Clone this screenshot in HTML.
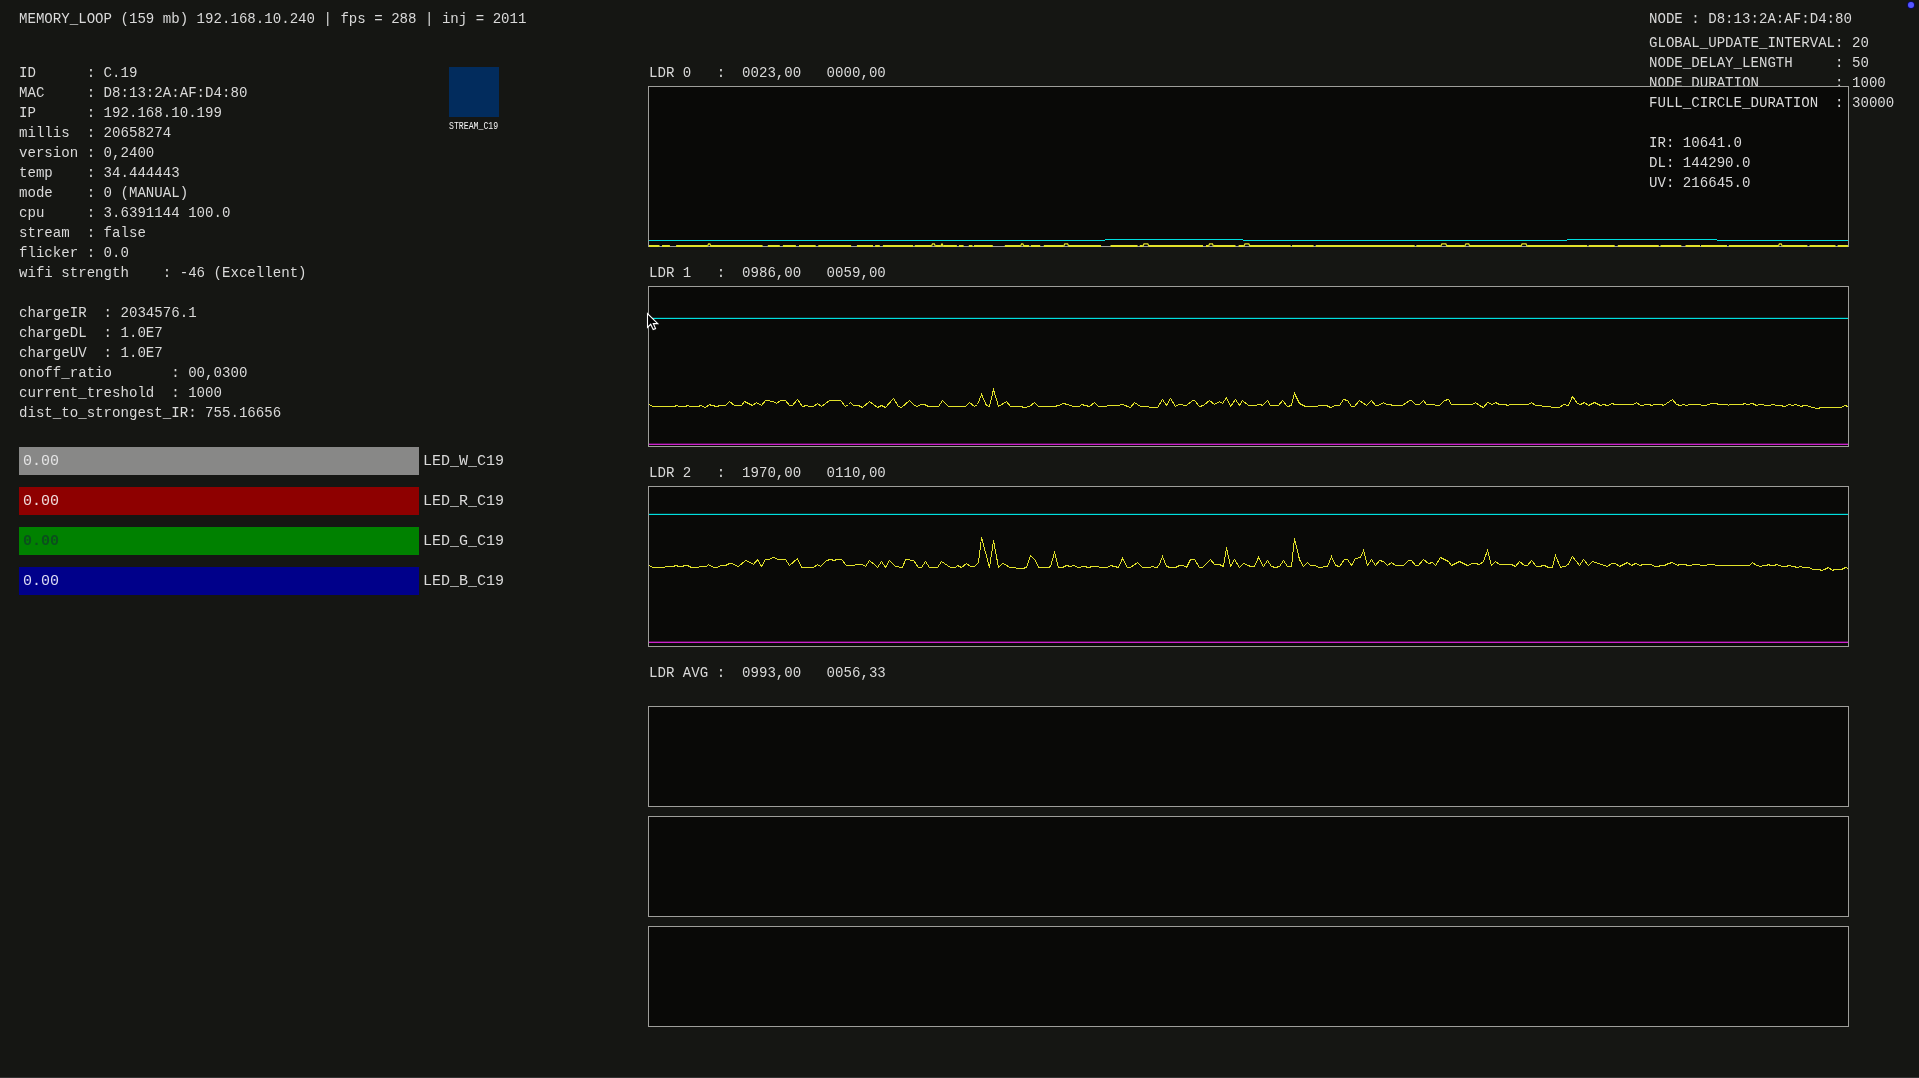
<!DOCTYPE html>
<html><head><meta charset="utf-8"><style>
html,body{margin:0;padding:0;}
body{will-change:transform;width:1919px;height:1078px;background:#151613;position:relative;overflow:hidden;}
.t{position:absolute;white-space:pre;font-family:"Liberation Mono",monospace;font-size:14.1px;line-height:16px;}
.b{position:absolute;white-space:pre;font-family:"Liberation Mono",monospace;font-size:15px;line-height:16px;}
.sm{position:absolute;white-space:pre;font-family:"Liberation Mono",monospace;font-size:8.2px;line-height:8px;color:#f4f4f4;transform:scaleY(1.3);transform-origin:0 0;}
.g{position:absolute;left:648px;width:1201px;box-sizing:border-box;border:1px solid #9e9e9a;background:#090907;}
</style></head><body>
<div class="t" style="left:19px;top:11px;color:#d9d9d9;">MEMORY_LOOP (159 mb) 192.168.10.240 | fps = 288 | inj = 2011</div>
<div class="t" style="left:19px;top:65px;color:#d9d9d9;">ID      : C.19</div>
<div class="t" style="left:19px;top:85px;color:#d9d9d9;">MAC     : D8:13:2A:AF:D4:80</div>
<div class="t" style="left:19px;top:105px;color:#d9d9d9;">IP      : 192.168.10.199</div>
<div class="t" style="left:19px;top:125px;color:#d9d9d9;">millis  : 20658274</div>
<div class="t" style="left:19px;top:145px;color:#d9d9d9;">version : 0,2400</div>
<div class="t" style="left:19px;top:165px;color:#d9d9d9;">temp    : 34.444443</div>
<div class="t" style="left:19px;top:185px;color:#d9d9d9;">mode    : 0 (MANUAL)</div>
<div class="t" style="left:19px;top:205px;color:#d9d9d9;">cpu     : 3.6391144 100.0</div>
<div class="t" style="left:19px;top:225px;color:#d9d9d9;">stream  : false</div>
<div class="t" style="left:19px;top:245px;color:#d9d9d9;">flicker : 0.0</div>
<div class="t" style="left:19px;top:265px;color:#d9d9d9;">wifi strength    : -46 (Excellent)</div>
<div class="t" style="left:19px;top:305px;color:#d9d9d9;">chargeIR  : 2034576.1</div>
<div class="t" style="left:19px;top:325px;color:#d9d9d9;">chargeDL  : 1.0E7</div>
<div class="t" style="left:19px;top:345px;color:#d9d9d9;">chargeUV  : 1.0E7</div>
<div class="t" style="left:19px;top:365px;color:#d9d9d9;">onoff_ratio       : 00,0300</div>
<div class="t" style="left:19px;top:385px;color:#d9d9d9;">current_treshold  : 1000</div>
<div class="t" style="left:19px;top:405px;color:#d9d9d9;">dist_to_strongest_IR: 755.16656</div>
<div style="position:absolute;left:449px;top:67px;width:50px;height:50px;background:#022c5d"></div>
<div class="sm" style="left:449px;top:121px">STREAM_C19</div>
<div style="position:absolute;left:19px;top:447px;width:400px;height:28px;background:#888887"></div>
<div class="b" style="left:23px;top:454px;color:#e4e4e4;">0.00</div>
<div class="b" style="left:423px;top:454px;color:#d9d9d9">LED_W_C19</div>
<div style="position:absolute;left:19px;top:487px;width:400px;height:28px;background:#8e0000"></div>
<div class="b" style="left:23px;top:494px;color:#f0dcdc;">0.00</div>
<div class="b" style="left:423px;top:494px;color:#d9d9d9">LED_R_C19</div>
<div style="position:absolute;left:19px;top:527px;width:400px;height:28px;background:#008100"></div>
<div class="b" style="left:23px;top:534px;color:#0b4f1d;font-weight:bold">0.00</div>
<div class="b" style="left:423px;top:534px;color:#d9d9d9">LED_G_C19</div>
<div style="position:absolute;left:19px;top:567px;width:400px;height:28px;background:#00008a"></div>
<div class="b" style="left:23px;top:574px;color:#dcdcf4;">0.00</div>
<div class="b" style="left:423px;top:574px;color:#d9d9d9">LED_B_C19</div>
<div class="t" style="left:1649px;top:11px;color:#d9d9d9;">NODE : D8:13:2A:AF:D4:80</div>
<div class="t" style="left:1649px;top:35px;color:#d9d9d9;">GLOBAL_UPDATE_INTERVAL: 20</div>
<div class="t" style="left:1649px;top:55px;color:#d9d9d9;">NODE_DELAY_LENGTH     : 50</div>
<div class="t" style="left:1649px;top:75px;color:#d9d9d9;">NODE_DURATION         : 1000</div>
<div class="g" style="top:86px;height:161px"></div>
<div class="g" style="top:286px;height:161px"></div>
<div class="g" style="top:486px;height:161px"></div>
<div class="g" style="top:706px;height:101px"></div>
<div class="g" style="top:816px;height:101px"></div>
<div class="g" style="top:926px;height:101px"></div>
<div class="t" style="left:649px;top:65px;color:#d9d9d9;">LDR 0   :  0023,00   0000,00</div>
<div class="t" style="left:649px;top:265px;color:#d9d9d9;">LDR 1   :  0986,00   0059,00</div>
<div class="t" style="left:649px;top:465px;color:#d9d9d9;">LDR 2   :  1970,00   0110,00</div>
<div class="t" style="left:649px;top:665px;color:#d9d9d9;">LDR AVG :  0993,00   0056,33</div>
<div style="position:absolute;left:649px;top:240px;width:456px;height:1px;background:#00dede"></div>
<div style="position:absolute;left:1105px;top:239px;width:138px;height:1px;background:#00dede"></div>
<div style="position:absolute;left:1243px;top:240px;width:324px;height:1px;background:#00dede"></div>
<div style="position:absolute;left:1567px;top:239px;width:150px;height:1px;background:#00dede"></div>
<div style="position:absolute;left:1717px;top:240px;width:131px;height:1px;background:#00dede"></div>
<div style="position:absolute;left:649px;top:317px;width:1199px;height:1px;background:rgba(0,222,222,0.18)"></div>
<div style="position:absolute;left:649px;top:318px;width:1199px;height:1px;background:#00dede"></div>
<div style="position:absolute;left:649px;top:443px;width:1199px;height:1px;background:rgba(204,34,204,0.35)"></div>
<div style="position:absolute;left:649px;top:444px;width:1199px;height:1px;background:#cc22cc"></div>
<div style="position:absolute;left:649px;top:513px;width:1199px;height:1px;background:rgba(0,222,222,0.18)"></div>
<div style="position:absolute;left:649px;top:514px;width:1199px;height:1px;background:#00dede"></div>
<div style="position:absolute;left:649px;top:641px;width:1199px;height:1px;background:rgba(204,34,204,0.35)"></div>
<div style="position:absolute;left:649px;top:642px;width:1199px;height:1px;background:#cc22cc"></div>
<svg style="position:absolute;left:0;top:0" width="1919" height="1078"><polyline fill="none" stroke="#e2e22a" stroke-width="1" stroke-linejoin="miter" shape-rendering="crispEdges" points="649.5,404.5 652.5,406.5 674.5,406.5 676.5,405.5 679.5,406.5 685.5,406.5 687.5,405.5 690.5,406.5 698.5,406.5 700.5,405.5 705.5,407.5 709.5,404.5 711.5,405.5 717.5,406.5 719.5,405.5 725.5,405.5 729.5,401.5 734.5,405.5 741.5,405.5 744.5,401.5 752.5,405.5 756.5,402.5 761.5,405.5 765.5,400.5 773.5,401.5 776.5,403.5 780.5,400.5 785.5,400.5 789.5,405.5 792.5,405.5 797.5,399.5 802.5,406.5 806.5,405.5 809.5,406.5 813.5,406.5 817.5,403.5 821.5,406.5 829.5,400.5 840.5,400.5 845.5,406.5 848.5,404.5 850.5,402.5 853.5,405.5 858.5,405.5 862.5,407.5 869.5,401.5 877.5,407.5 881.5,405.5 885.5,407.5 893.5,398.5 898.5,406.5 901.5,407.5 909.5,400.5 914.5,405.5 917.5,406.5 920.5,404.5 924.5,404.5 928.5,406.5 938.5,406.5 942.5,400.5 947.5,405.5 948.5,406.5 965.5,406.5 969.5,402.5 974.5,406.5 977.5,404.5 981.5,394.5 986.5,405.5 989.5,406.5 993.5,389.5 998.5,406.5 1006.5,401.5 1010.5,406.5 1020.5,406.5 1024.5,407.5 1029.5,406.5 1034.5,402.5 1038.5,406.5 1048.5,406.5 1054.5,406.5 1058.5,405.5 1063.5,403.5 1067.5,404.5 1073.5,406.5 1079.5,406.5 1081.5,404.5 1089.5,406.5 1094.5,402.5 1098.5,406.5 1106.5,406.5 1107.5,405.5 1117.5,405.5 1122.5,404.5 1130.5,407.5 1134.5,402.5 1140.5,406.5 1157.5,407.5 1162.5,399.5 1166.5,405.5 1170.5,398.5 1175.5,406.5 1178.5,404.5 1186.5,405.5 1192.5,400.5 1194.5,400.5 1199.5,406.5 1203.5,405.5 1209.5,400.5 1214.5,404.5 1219.5,401.5 1222.5,403.5 1226.5,397.5 1230.5,406.5 1235.5,399.5 1239.5,405.5 1242.5,400.5 1248.5,405.5 1256.5,405.5 1257.5,404.5 1260.5,404.5 1262.5,405.5 1267.5,400.5 1270.5,405.5 1278.5,405.5 1282.5,400.5 1287.5,406.5 1291.5,405.5 1294.5,393.5 1299.5,403.5 1305.5,406.5 1317.5,406.5 1318.5,405.5 1326.5,405.5 1330.5,407.5 1335.5,405.5 1339.5,405.5 1343.5,399.5 1347.5,400.5 1351.5,406.5 1354.5,406.5 1359.5,400.5 1366.5,405.5 1371.5,400.5 1375.5,405.5 1378.5,405.5 1383.5,402.5 1386.5,404.5 1390.5,404.5 1392.5,405.5 1402.5,405.5 1409.5,400.5 1411.5,400.5 1415.5,404.5 1419.5,404.5 1423.5,400.5 1426.5,404.5 1434.5,404.5 1435.5,405.5 1439.5,405.5 1444.5,400.5 1448.5,399.5 1451.5,404.5 1472.5,404.5 1475.5,402.5 1479.5,405.5 1483.5,407.5 1487.5,402.5 1492.5,404.5 1495.5,402.5 1499.5,404.5 1504.5,404.5 1508.5,405.5 1509.5,404.5 1528.5,404.5 1531.5,402.5 1535.5,405.5 1541.5,405.5 1542.5,406.5 1559.5,407.5 1563.5,404.5 1568.5,405.5 1572.5,396.5 1577.5,403.5 1580.5,404.5 1584.5,402.5 1588.5,405.5 1594.5,402.5 1600.5,405.5 1603.5,404.5 1607.5,405.5 1612.5,403.5 1614.5,404.5 1633.5,404.5 1636.5,402.5 1640.5,405.5 1648.5,404.5 1652.5,405.5 1653.5,404.5 1661.5,404.5 1663.5,405.5 1666.5,403.5 1672.5,399.5 1676.5,404.5 1680.5,405.5 1683.5,404.5 1686.5,405.5 1689.5,404.5 1700.5,404.5 1701.5,405.5 1705.5,405.5 1711.5,403.5 1716.5,403.5 1718.5,404.5 1727.5,404.5 1728.5,405.5 1729.5,404.5 1742.5,404.5 1744.5,403.5 1747.5,404.5 1752.5,403.5 1756.5,405.5 1759.5,404.5 1763.5,404.5 1764.5,405.5 1770.5,405.5 1771.5,404.5 1774.5,404.5 1775.5,405.5 1780.5,405.5 1784.5,406.5 1789.5,404.5 1792.5,405.5 1795.5,404.5 1801.5,406.5 1803.5,405.5 1806.5,405.5 1812.5,407.5 1817.5,408.5 1821.5,407.5 1841.5,407.5 1844.5,405.5 1848.5,406.5"/><polyline fill="none" stroke="#e2e22a" stroke-width="1" stroke-linejoin="miter" shape-rendering="crispEdges" points="649.5,565.5 652.5,567.5 664.5,567.5 665.5,566.5 673.5,566.5 675.5,565.5 679.5,566.5 682.5,566.5 684.5,565.5 687.5,565.5 691.5,567.5 698.5,567.5 699.5,566.5 706.5,566.5 708.5,564.5 713.5,567.5 717.5,567.5 720.5,565.5 725.5,565.5 729.5,563.5 732.5,563.5 737.5,566.5 738.5,566.5 745.5,560.5 748.5,561.5 753.5,564.5 757.5,559.5 761.5,566.5 765.5,559.5 768.5,559.5 773.5,557.5 778.5,559.5 785.5,559.5 789.5,565.5 797.5,558.5 801.5,567.5 813.5,567.5 817.5,564.5 820.5,566.5 826.5,560.5 830.5,559.5 834.5,560.5 836.5,559.5 841.5,559.5 846.5,565.5 848.5,565.5 854.5,565.5 855.5,564.5 862.5,564.5 865.5,566.5 869.5,560.5 875.5,565.5 877.5,567.5 881.5,561.5 885.5,567.5 889.5,560.5 895.5,566.5 902.5,567.5 905.5,559.5 913.5,560.5 918.5,567.5 921.5,567.5 925.5,561.5 929.5,567.5 937.5,567.5 941.5,561.5 950.5,567.5 955.5,567.5 957.5,565.5 961.5,567.5 966.5,563.5 970.5,566.5 974.5,566.5 978.5,562.5 981.5,537.5 989.5,567.5 993.5,540.5 998.5,567.5 1002.5,563.5 1005.5,564.5 1009.5,567.5 1022.5,568.5 1026.5,567.5 1030.5,555.5 1035.5,560.5 1038.5,567.5 1048.5,567.5 1050.5,566.5 1054.5,552.5 1058.5,567.5 1062.5,567.5 1066.5,565.5 1070.5,566.5 1073.5,565.5 1078.5,567.5 1083.5,566.5 1089.5,567.5 1091.5,566.5 1098.5,566.5 1099.5,567.5 1107.5,567.5 1110.5,565.5 1114.5,566.5 1118.5,567.5 1122.5,558.5 1127.5,567.5 1130.5,567.5 1137.5,562.5 1142.5,567.5 1150.5,567.5 1151.5,566.5 1156.5,567.5 1158.5,566.5 1162.5,556.5 1166.5,566.5 1170.5,567.5 1175.5,567.5 1179.5,565.5 1183.5,565.5 1186.5,567.5 1190.5,559.5 1194.5,559.5 1199.5,567.5 1202.5,567.5 1210.5,559.5 1214.5,564.5 1219.5,564.5 1223.5,566.5 1226.5,547.5 1230.5,566.5 1234.5,559.5 1239.5,567.5 1243.5,563.5 1248.5,565.5 1250.5,566.5 1254.5,566.5 1258.5,557.5 1263.5,566.5 1267.5,560.5 1271.5,566.5 1275.5,567.5 1279.5,566.5 1283.5,560.5 1287.5,566.5 1291.5,566.5 1294.5,538.5 1299.5,559.5 1303.5,566.5 1307.5,562.5 1310.5,565.5 1314.5,565.5 1319.5,567.5 1327.5,566.5 1331.5,556.5 1335.5,565.5 1339.5,566.5 1344.5,559.5 1347.5,559.5 1351.5,565.5 1355.5,558.5 1360.5,557.5 1363.5,550.5 1367.5,565.5 1371.5,559.5 1375.5,565.5 1379.5,560.5 1383.5,561.5 1387.5,565.5 1391.5,562.5 1395.5,565.5 1403.5,565.5 1408.5,560.5 1411.5,560.5 1415.5,565.5 1418.5,565.5 1423.5,559.5 1428.5,563.5 1432.5,562.5 1435.5,565.5 1440.5,557.5 1448.5,561.5 1451.5,565.5 1459.5,561.5 1463.5,563.5 1467.5,565.5 1472.5,563.5 1475.5,563.5 1479.5,564.5 1483.5,561.5 1487.5,550.5 1491.5,565.5 1495.5,561.5 1499.5,564.5 1511.5,564.5 1515.5,566.5 1519.5,561.5 1524.5,565.5 1527.5,565.5 1531.5,560.5 1536.5,566.5 1538.5,566.5 1544.5,565.5 1548.5,567.5 1552.5,567.5 1555.5,555.5 1560.5,567.5 1567.5,565.5 1572.5,556.5 1579.5,565.5 1583.5,559.5 1588.5,565.5 1592.5,561.5 1595.5,562.5 1607.5,566.5 1611.5,563.5 1615.5,563.5 1619.5,566.5 1627.5,562.5 1631.5,565.5 1635.5,563.5 1640.5,565.5 1642.5,564.5 1648.5,564.5 1651.5,564.5 1654.5,566.5 1658.5,566.5 1660.5,565.5 1664.5,565.5 1666.5,564.5 1668.5,563.5 1672.5,562.5 1677.5,565.5 1679.5,564.5 1685.5,564.5 1687.5,565.5 1691.5,565.5 1692.5,564.5 1699.5,564.5 1700.5,565.5 1706.5,565.5 1707.5,564.5 1714.5,564.5 1715.5,565.5 1749.5,565.5 1752.5,562.5 1756.5,565.5 1761.5,566.5 1762.5,565.5 1766.5,565.5 1768.5,564.5 1770.5,565.5 1774.5,565.5 1776.5,564.5 1779.5,565.5 1782.5,566.5 1786.5,566.5 1788.5,565.5 1793.5,566.5 1797.5,567.5 1800.5,566.5 1803.5,567.5 1809.5,567.5 1812.5,569.5 1819.5,569.5 1821.5,570.5 1824.5,569.5 1828.5,567.5 1832.5,570.5 1834.5,569.5 1841.5,569.5 1845.5,567.5 1848.5,568.5"/><rect x="649" y="245" width="10.5" height="2" fill="#e2e22a"/><rect x="662" y="245" width="7.9" height="2" fill="#e2e22a"/><rect x="676.1" y="245" width="31.3" height="2" fill="#e2e22a"/><rect x="711" y="245" width="51.6" height="2" fill="#e2e22a"/><rect x="767.8" y="245" width="12.0" height="2" fill="#e2e22a"/><rect x="782.9" y="245" width="13.0" height="2" fill="#e2e22a"/><rect x="799" y="245" width="16.7" height="2" fill="#e2e22a"/><rect x="818.3" y="245" width="32.8" height="2" fill="#e2e22a"/><rect x="856.9" y="245" width="16.1" height="2" fill="#e2e22a"/><rect x="875.1" y="245" width="4.7" height="2" fill="#e2e22a"/><rect x="882.9" y="245" width="30.2" height="2" fill="#e2e22a"/><rect x="914.7" y="245" width="16.6" height="2" fill="#e2e22a"/><rect x="935.5" y="245" width="5.2" height="2" fill="#e2e22a"/><rect x="943.3" y="245" width="13.6" height="2" fill="#e2e22a"/><rect x="958.9" y="245" width="4.7" height="2" fill="#e2e22a"/><rect x="968.8" y="245" width="3.7" height="2" fill="#e2e22a"/><rect x="974" y="245" width="18.8" height="2" fill="#e2e22a"/><rect x="1004.8" y="245" width="15.6" height="2" fill="#e2e22a"/><rect x="1024" y="245" width="5.2" height="2" fill="#e2e22a"/><rect x="1030.8" y="245" width="9.4" height="2" fill="#e2e22a"/><rect x="1043.8" y="245" width="19.8" height="2" fill="#e2e22a"/><rect x="1068.8" y="245" width="32.2" height="2" fill="#e2e22a"/><rect x="1110.5" y="245" width="27.1" height="2" fill="#e2e22a"/><rect x="1139.7" y="245" width="3.1" height="2" fill="#e2e22a"/><rect x="1149" y="245" width="54.0" height="2" fill="#e2e22a"/><rect x="1206" y="245" width="2.4" height="2" fill="#e2e22a"/><rect x="1213.6" y="245" width="21.9" height="2" fill="#e2e22a"/><rect x="1238.6" y="245" width="5.2" height="2" fill="#e2e22a"/><rect x="1250" y="245" width="40.7" height="2" fill="#e2e22a"/><rect x="1292" y="245" width="21.6" height="2" fill="#e2e22a"/><rect x="1315.7" y="245" width="99.0" height="2" fill="#e2e22a"/><rect x="1416.3" y="245" width="24.4" height="2" fill="#e2e22a"/><rect x="1447" y="245" width="17.7" height="2" fill="#e2e22a"/><rect x="1469.9" y="245" width="51.0" height="2" fill="#e2e22a"/><rect x="1527.2" y="245" width="60.0" height="2" fill="#e2e22a"/><rect x="1588.6" y="245" width="26.1" height="2" fill="#e2e22a"/><rect x="1617.8" y="245" width="41.0" height="2" fill="#e2e22a"/><rect x="1660.5" y="245" width="20.8" height="2" fill="#e2e22a"/><rect x="1685.5" y="245" width="14.5" height="2" fill="#e2e22a"/><rect x="1701" y="245" width="26.0" height="2" fill="#e2e22a"/><rect x="1728.8" y="245" width="49.4" height="2" fill="#e2e22a"/><rect x="1782.4" y="245" width="25.0" height="2" fill="#e2e22a"/><rect x="1809.5" y="245" width="26.0" height="2" fill="#e2e22a"/><rect x="1837.6" y="245" width="10.4" height="2" fill="#e2e22a"/><path d="M707.4 246.5 L708.6 243.8 L709.8 243.8 L711 246.5" fill="none" stroke="#e2e22a" stroke-width="1.3"/><path d="M931.3 246.5 L932.5 243.8 L934.3 243.8 L935.5 246.5" fill="none" stroke="#e2e22a" stroke-width="1.3"/><path d="M940.7 246.5 L941.9000000000001 243.8 L942.0999999999999 243.8 L943.3 246.5" fill="none" stroke="#e2e22a" stroke-width="1.3"/><path d="M1020.4 246.5 L1021.6 243.8 L1022.8 243.8 L1024 246.5" fill="none" stroke="#e2e22a" stroke-width="1.3"/><path d="M1063.6 246.5 L1064.8 243.8 L1067.6 243.8 L1068.8 246.5" fill="none" stroke="#e2e22a" stroke-width="1.3"/><path d="M1142.8 246.5 L1144.0 243.8 L1147.8 243.8 L1149 246.5" fill="none" stroke="#e2e22a" stroke-width="1.3"/><path d="M1208.4 246.5 L1209.6000000000001 243.8 L1212.3999999999999 243.8 L1213.6 246.5" fill="none" stroke="#e2e22a" stroke-width="1.3"/><path d="M1243.8 246.5 L1245.0 243.8 L1248.8 243.8 L1250 246.5" fill="none" stroke="#e2e22a" stroke-width="1.3"/><path d="M1440.7 246.5 L1441.9 243.8 L1445.8 243.8 L1447 246.5" fill="none" stroke="#e2e22a" stroke-width="1.3"/><path d="M1464.7 246.5 L1465.9 243.8 L1468.7 243.8 L1469.9 246.5" fill="none" stroke="#e2e22a" stroke-width="1.3"/><path d="M1520.9 246.5 L1522.1000000000001 243.8 L1526.0 243.8 L1527.2 246.5" fill="none" stroke="#e2e22a" stroke-width="1.3"/><path d="M1778.2 246.5 L1779.4 243.8 L1781.2 243.8 L1782.4 246.5" fill="none" stroke="#e2e22a" stroke-width="1.3"/></svg>
<div class="t" style="left:1649px;top:95px;color:#d9d9d9;">FULL_CIRCLE_DURATION  : 30000</div>
<div class="t" style="left:1649px;top:135px;color:#d9d9d9;">IR: 10641.0</div>
<div class="t" style="left:1649px;top:155px;color:#d9d9d9;">DL: 144290.0</div>
<div class="t" style="left:1649px;top:175px;color:#d9d9d9;">UV: 216645.0</div>
<svg style="position:absolute;left:0;top:0" width="700" height="340"><path d="M647.5 313.5 L647.5 327.5 L650.7 324.3 L653.2 329.6 L655.6 328.6 L653.3 323.6 L657.8 323.6 Z" fill="#000" stroke="#fff" stroke-width="1.1" stroke-linejoin="miter"/></svg>
<div style="position:absolute;left:1907.8px;top:1.9px;width:6.2px;height:6.2px;border-radius:50%;background:#5656ff;box-shadow:0 0 1px 0.6px #0000a0"></div>
<div style="position:absolute;left:0;top:1077px;width:1919px;height:1px;background:#333"></div>
</body></html>
